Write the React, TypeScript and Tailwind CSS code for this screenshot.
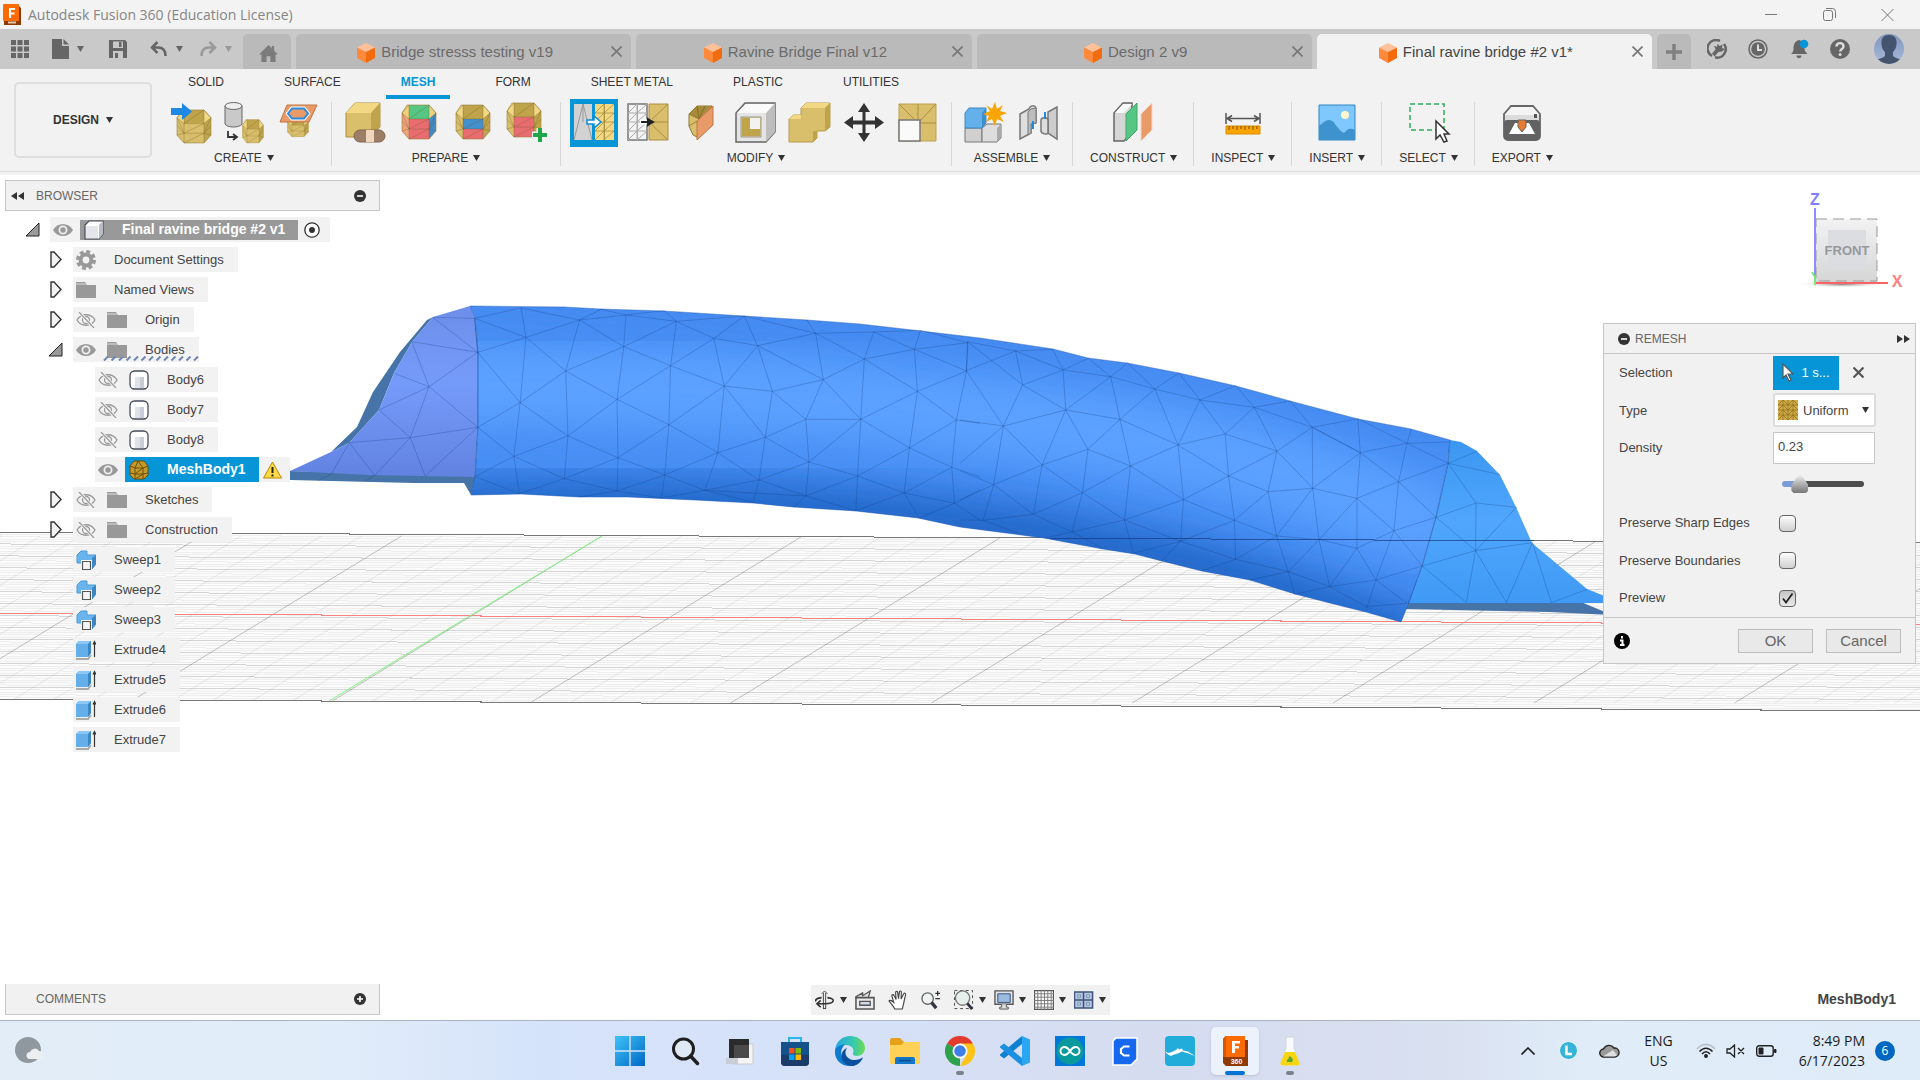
import type { ReactNode } from 'react'
import { useState } from 'react'

/* ---------- shared bits ---------- */

function Caret({ className = 'fill-[#333]' }: { className?: string }) {
  return (
    <svg className={`h-[6px] w-[7px] shrink-0 ${className}`} viewBox="0 0 7 6">
      <path d="M0 0h7L3.5 6z" />
    </svg>
  )
}

interface DrumProps {
  top?: string
  corner?: string
  upper?: string
  lower?: string
  left?: string
  right?: string
}

// Faceted mesh cylinder used by most of the mesh tools, drawn in a 36x36 box
function Drum({
  top = '#bfa44c',
  corner = '#f2d884',
  upper = '#d9be6b',
  lower = '#d9be6b',
  left = '#d9be6b',
  right = '#bfa44c',
}: DrumProps) {
  return (
    <g strokeLinejoin="round">
      <path d="M6 1h22l7 8v18l-7 8H8l-7-8V9z" fill={corner} />
      <path d="M1 9l7 6v20l-7-8z" fill={left} />
      <path d="M35 9l-7 6v20l7-8z" fill={right} />
      <path d="M8 1h20v14H8z" fill={top} />
      <path d="M8 15h20v10H8z" fill={upper} />
      <path d="M8 25h20v10H8z" fill={lower} />
      <path
        d="M8 1l-7 8 7 6h20l7-6-7-8M8 1v14L28 1v14M8 15v20M28 15v20M8 25L28 15M8 35l20-10M1 17l7 8h20l7-8M1 9l7 16M35 9l-7 16M1 27l7-2M35 27l-7-2"
        fill="none"
        stroke="#6b5a20"
        strokeOpacity="0.32"
      />
      <path d="M6 1h22l7 8v18l-7 8H8l-7-8V9z" fill="none" stroke="#96803a" strokeOpacity="0.6" />
    </g>
  )
}

function Cube() {
  return (
    <svg className="h-[20px] w-[18px] shrink-0" viewBox="0 0 18 20">
      <path d="M9 0l9 4.5L9 9 0 4.5z" fill="#ffc09a" />
      <path d="M0 4.5L9 9v11l-9-5z" fill="#ff8a3c" />
      <path d="M18 4.5L9 9v11l9-5z" fill="#f26c0d" />
    </svg>
  )
}

/* ---------- title and document tabs ---------- */

function TitleBar() {
  return (
    <header className="flex h-[29px] items-center bg-[#f3f3f3] pl-[3px]">
      <svg className="mr-[7px] h-[22px] w-[18px]" viewBox="0 0 18 22">
        <path d="M1 1h14l3 3v17H1z" fill="#8f3a00" />
        <rect width="16" height="17" rx="1" fill="#ff6b00" />
        <path d="M6 4h6v2H8v2.5h3.5v2H8V14H6z" fill="#fff" />
        <path d="M5 18.5h8" stroke="#e9c6ad" strokeWidth="2" />
      </svg>
      <span className="flex-1 font-['Open_Sans',sans-serif] text-[14px] text-[#858585]">
        Autodesk Fusion 360 (Education License)
      </span>
      <div className="flex items-center pr-[4px]">
        <button aria-label="Minimize" className="flex h-[29px] w-[58px] items-center justify-center">
          <svg className="h-[12px] w-[12px]" viewBox="0 0 12 12" stroke="#777"><path d="M0 5.5h12" /></svg>
        </button>
        <button aria-label="Restore" className="flex h-[29px] w-[58px] items-center justify-center">
          <svg className="h-[13px] w-[13px]" viewBox="0 0 13 13" fill="none" stroke="#777">
            <rect x="0.5" y="2.5" width="9" height="10" rx="2" />
            <path d="M3 .5h6.5a3 3 0 013 3V10" />
          </svg>
        </button>
        <button aria-label="Close" className="flex h-[29px] w-[58px] items-center justify-center">
          <svg className="h-[12px] w-[13px]" viewBox="0 0 13 12" stroke="#777"><path d="M.5 0l12 12M12.5 0l-12 12" /></svg>
        </button>
      </div>
    </header>
  )
}

const DOCS = [
  { name: 'Bridge stresss testing v19', active: false },
  { name: 'Ravine Bridge Final v12', active: false },
  { name: 'Design 2 v9', active: false },
  { name: 'Final ravine bridge #2 v1*', active: true },
]

function DocumentBar() {
  return (
    <div className="flex h-[40px] bg-[#c9c9c9]">
      <div className="flex w-[243px] shrink-0 items-center pl-[11px]">
        <button aria-label="Data panel">
          <svg className="h-[18px] w-[18px]" viewBox="0 0 18 18" fill="#666">
            <path d="M0 0h5v5H0zM6.5 0h5v5h-5zM13 0h5v5h-5zM0 6.5h5v5H0zM6.5 6.5h5v5h-5zM13 6.5h5v5h-5zM0 13h5v5H0zM6.5 13h5v5h-5zM13 13h5v5h-5z" />
          </svg>
        </button>
        <button aria-label="File" className="ml-[23px] flex items-center gap-[8px]">
          <svg className="h-[20px] w-[17px]" viewBox="0 0 17 20" fill="#666">
            <path d="M0 0h10v7h7v13H0z" />
            <path d="M11.5 0L17 5.5h-5.5z" />
          </svg>
          <Caret className="fill-[#666]" />
        </button>
        <button aria-label="Save" className="ml-[25px]">
          <svg className="h-[18px] w-[18px]" viewBox="0 0 18 18">
            <path d="M0 0h16l2 2v16H0z" fill="#666" />
            <path d="M4 1.5h10V8H4zM4 11h10v7H4z" fill="#c9c9c9" />
            <path d="M10 2h2.5v5H10zM6 13h3v5H6z" fill="#666" />
          </svg>
        </button>
        <button aria-label="Undo" className="ml-[23px] flex items-center gap-[9px]">
          <svg className="h-[16px] w-[17px]" viewBox="0 0 17 16" fill="none" stroke="#666" strokeWidth="2.5">
            <path d="M7.5 1L2 6.5 7.5 12M2 6.5h6c5 0 7.5 3 7.5 8.5" />
          </svg>
          <Caret className="fill-[#666]" />
        </button>
        <button aria-label="Redo" className="ml-[17px] flex items-center gap-[8px]">
          <svg className="h-[16px] w-[17px]" viewBox="0 0 17 16" fill="none" stroke="#999" strokeWidth="2.5">
            <path d="M9.5 1L15 6.5 9.5 12M15 6.5H9c-5 0-7.5 3-7.5 8.5" />
          </svg>
          <Caret className="fill-[#999]" />
        </button>
      </div>
      <nav className="flex min-w-0 flex-1 gap-[5px] pt-[5px]">
        <button aria-label="Home" className="flex w-[48px] shrink-0 items-center justify-center rounded-t-[5px] bg-[#bababa]">
          <svg className="mt-[4px] ml-[3px] h-[17px] w-[19px]" viewBox="0 0 20 18" fill="#7b7b7b">
            <path d="M10 0l3.5 3.5V1H16v5l4 4h-2.5v8H12v-6H8v6H2.5v-8H0z" />
          </svg>
        </button>
        {DOCS.map((doc) => (
          <div
            key={doc.name}
            className={`flex min-w-0 flex-1 items-center rounded-t-[5px] pl-[12px] text-[15px] ${
              doc.active ? 'bg-[#f2f2f2] text-[#444]' : 'bg-[#bababa] text-[#6a6a6a]'
            }`}
          >
            <button className="flex min-w-0 flex-1 items-center justify-center gap-[6px] pt-[2px] whitespace-nowrap">
              <Cube />
              {doc.name}
            </button>
            <button aria-label="Close tab" className="flex w-[29px] justify-center">
              <svg className="h-[11px] w-[11px]" viewBox="0 0 11 11" stroke="#777" strokeWidth="1.7">
                <path d="M.5.5l10 10M10.5.5l-10 10" />
              </svg>
            </button>
          </div>
        ))}
        <button aria-label="New tab" className="flex w-[34px] shrink-0 items-center justify-center rounded-t-[5px] bg-[#bababa]">
          <svg className="h-[16px] w-[16px]" viewBox="0 0 16 16" stroke="#808080" strokeWidth="3.5">
            <path d="M8 0v16M0 8h16" />
          </svg>
        </button>
      </nav>
      <div className="flex w-[229px] shrink-0 items-center gap-[21px] pl-[16px]">
        <button aria-label="Extensions">
          <svg className="h-[20px] w-[20px]" viewBox="0 0 20 20" fill="none">
            <path d="M5 17A8.5 8.5 0 0113 2M17 5a8.500 8.500 0 01-9 13.300" stroke="#666" strokeWidth="2.500" />
            <path d="M5 14.500l3.500-4L7 6.500 10 8l.5-3.500L12.500 7l3-1.500-.5 3.500 3 1-3 2.500-3.500.5-4 4.500z" fill="#666" />
          </svg>
        </button>
        <button aria-label="Job status">
          <svg className="h-[20px] w-[20px]" viewBox="0 0 20 20" fill="none">
            <circle cx="10" cy="10" r="9" stroke="#666" strokeWidth="1.5" />
            <circle cx="10" cy="10" r="6.8" fill="#666" />
            <path d="M10 5.5V11h4" stroke="#ddd" strokeWidth="2" />
          </svg>
        </button>
        <button aria-label="Notifications">
          <svg className="h-[20px] w-[20px]" viewBox="0 0 20 20">
            <path d="M10 1c4 1 5 4 5.500 9 0 2 1.500 3 3 5H2c2-2 2.500-3 2.500-5C4.500 5 6 2 10 1zM7.500 16.500h5c0 3.500-5 3.500-5 0z" fill="#666" />
            <circle cx="15" cy="5" r="4.3" fill="#0696d7" />
          </svg>
        </button>
        <button aria-label="Help">
          <svg className="h-[20px] w-[20px]" viewBox="0 0 20 20">
            <circle cx="10" cy="10" r="10" fill="#666" />
            <path d="M6.500 7.500c0-4.500 7-4.500 7 0 0 2.500-3.300 2.500-3.300 5" fill="none" stroke="#ddd" strokeWidth="2.4" />
            <circle cx="10.1" cy="15.6" r="1.5" fill="#ddd" />
          </svg>
        </button>
        <button aria-label="Account" className="ml-[3px]">
          <svg className="h-[30px] w-[30px]" viewBox="0 0 30 30">
            <defs>
              <linearGradient id="avatar" x1="0" y1="0" x2="0" y2="1">
                <stop offset="0" stopColor="#7f95bd" />
                <stop offset="1" stopColor="#a9bbdb" />
              </linearGradient>
              <clipPath id="avatarClip"><circle cx="15" cy="15" r="15" /></clipPath>
            </defs>
            <g clipPath="url(#avatarClip)">
              <rect width="30" height="30" fill="url(#avatar)" />
              <path d="M15 1c6 0 8 4 7.500 9-.3 4-1.500 6-3.500 8v4c2 2 6 2.500 8 4v5H3v-5c2-1.500 6-2 8-4v-4c-2-2-3.200-4-3.500-8C7 5 9 1 15 1z" fill="#44546f" />
            </g>
          </svg>
        </button>
      </div>
    </div>
  )
}

/* ---------- ribbon ---------- */

const RIBBON_TABS = ['SOLID', 'SURFACE', 'MESH', 'FORM', 'SHEET METAL', 'PLASTIC', 'UTILITIES']

interface Tool {
  name: string
  art: ReactNode
}

const CREATE: Tool[] = [
  {
    name: 'Insert mesh',
    art: (
      <>
        <g transform="translate(9 9) scale(1 0.97)"><Drum /></g>
        <path d="M4 8h11V3l10 8.500L15 20v-5H4z" fill="#1e88e5" />
      </>
    ),
  },
  {
    name: 'Tessellate',
    art: (
      <>
        <path d="M4 6v18c2 4 15 4 17 0V6" fill="#c9c9c9" stroke="#666" />
        <ellipse cx="12.5" cy="6" rx="8.5" ry="3.5" fill="#eee" stroke="#666" />
        <path d="M7 31v6h8M12 34l4 3-4 3" fill="none" stroke="#333" strokeWidth="1.8" />
        <g transform="translate(21 19) scale(0.61 0.68)"><Drum /></g>
      </>
    ),
  },
  {
    name: 'Section sketch',
    art: (
      <>
        <g transform="translate(12 17) scale(0.61 0.56)"><Drum /></g>
        <path d="M12 5h30l-8 17H5z" fill="#e89a68" stroke="#c17443" />
        <path d="M13 13.500l4-5h12l4 5-4 5H17z" fill="#f6e2d4" stroke="#fff" strokeWidth="4" />
        <path d="M13 13.500l4-5h12l4 5-4 5H17z" fill="#e89a68" stroke="#2b8be0" strokeWidth="2" />
      </>
    ),
  },
]

const PREPARE: Tool[] = [
  {
    name: 'Repair',
    art: (
      <>
        <path d="M4 13L13 3h25v24L29 37H4z" fill="#d9be6b" stroke="#a98f45" />
        <path d="M4 13L13 3h25L29 13z" fill="#f2d884" />
        <path d="M29 13L38 3v24L29 37z" fill="#bfa44c" />
        <rect x="12" y="30" width="31" height="12" rx="6" fill="#9c7f66" stroke="#7f6450" />
        <path d="M24 30h8v12h-8z" fill="#efd6bd" />
      </>
    ),
  },
  {
    name: 'Face groups',
    art: <g transform="translate(5 4)"><Drum top="#56c684" corner="#ecd27c" upper="#e96d70" lower="#e96d70" left="#f0a27d" right="#3f8ac9" /></g>,
  },
  {
    name: 'Combine face groups',
    art: <g transform="translate(5 4)"><Drum upper="#4390cf" lower="#e96d70" /></g>,
  },
  {
    name: 'Create face group',
    art: (
      <>
        <g transform="translate(2 2)"><Drum upper="#e96d70" lower="#e96d70" /></g>
        <path d="M28 35h15M36 28v14" stroke="#f2f2f2" strokeWidth="7" />
        <path d="M29 35h14M36 28v14" stroke="#1fa54a" strokeWidth="4" />
      </>
    ),
  },
]

const MODIFY: Tool[] = [
  {
    name: 'Remesh',
    art: (
      <>
        <path d="M3 4h18v36H3z" fill="#d2d2d2" />
        <path d="M3 40l9-36 9 36M12 4v18" fill="none" stroke="#999" />
        <path d="M24 4h19v36H24z" fill="#f5d982" />
        <path d="M24 13h19M24 22h19M24 31h19M33.500 4v36M24 13l9-9 0 9 10-9M24 22l9-9 0 9 10-9M24 31l9-9 0 9 10-9M24 40l9-9 0 9 10-9" fill="none" stroke="#9d843a" strokeOpacity="0.7" />
        <path d="M16 20h7v-4l7 6-7 6v-4h-7z" fill="#fff" stroke="#0a8fd6" strokeWidth="1.5" />
      </>
    ),
  },
  {
    name: 'Reduce',
    art: (
      <>
        <path d="M3 4h19v36H3z" fill="#f4f4f4" stroke="#777" strokeWidth="1.5" />
        <path d="M3 13h19M3 22h19M3 31h19M12.500 4v36M3 13l9-9 0 9 10-9M3 22l9-9 0 9 10-9M3 31l9-9 0 9 10-9M3 40l9-9 0 9 10-9" fill="none" stroke="#aaa" />
        <path d="M24 4h19v36H24z" fill="#d9be6b" stroke="#a98f45" />
        <path d="M43 4L24 22l19 18M24 22h19" fill="none" stroke="#a98f45" />
        <path d="M15 22h12" stroke="#fff" strokeWidth="5" />
        <path d="M16 22h9M23 19l5 3-5 3z" fill="#222" stroke="#222" strokeWidth="2" />
      </>
    ),
  },
  {
    name: 'Plane cut',
    art: (
      <>
        <path d="M10 14l8-8h15L20 20v18l-6-3-4-9z" fill="#d9be6b" stroke="#8f7934" />
        <path d="M10 14l8-8h14L20 19z" fill="#a58a38" />
        <path d="M18 6l2 13M10 14l10 5M10 26l10-6M26 6l-6 13" stroke="#6f5c22" strokeOpacity="0.6" />
        <path d="M18 21L34 6v19L18 40z" fill="#e89a68" stroke="#c17443" />
      </>
    ),
  },
  {
    name: 'Shell',
    art: (
      <>
        <path d="M3 13l9-10h30v29l-9 10H3z" fill="#e4e4e4" stroke="#666" strokeWidth="1.5" />
        <path d="M33 13l9-10v29l-9 10z" fill="#bdbdbd" />
        <path d="M4 13l9-9h28l-8 9z" fill="#fafafa" />
        <path d="M8 17h20v20H8z" fill="#e3ca7c" stroke="#999" />
        <path d="M9 18h8v11h10v7H9z" fill="#bfa44c" />
        <path d="M17 18h10v11H17z" fill="#f2f2f2" />
      </>
    ),
  },
  {
    name: 'Combine',
    art: (
      <>
        <path d="M2 19l4-4h8V8l5-5h24v24l-5 4h-8v7l-4 4H2z" fill="#d9be6b" stroke="#b79b4b" />
        <path d="M14 8l5-5h24l-5 5zM2 19l4-4h8v4z" fill="#f2d884" />
        <path d="M38 8l5-5v24l-5 4zM26 31h4v7l-4 4z" fill="#bfa44c" />
      </>
    ),
  },
  {
    name: 'Move',
    art: <path d="M23 3l6 9h-4.500v8.500H34V16l9 6.500-9 6.500v-4.500h-9.500V33H29l-6 9-6-9h4.500v-8.500H12V29l-9-6.500L12 16v4.500h9.500V12H17z" fill="#333" />,
  },
  {
    name: 'Scale',
    art: (
      <>
        <path d="M4 4h37v37H4z" fill="#d9be6b" stroke="#bca250" />
        <path d="M23 4v37M4 4l19 19M41 4L23 23h18" fill="none" stroke="#a98f45" />
        <path d="M4 20h21v21H4z" fill="#fafafa" stroke="#777" strokeWidth="1.5" />
      </>
    ),
  },
]

const ASSEMBLE: Tool[] = [
  {
    name: 'New component',
    art: (
      <>
        <path d="M3 28h17v14H3z" fill="#d0d0d0" stroke="#777" />
        <path d="M20 28l5-4h14v14l-4 4H20z" fill="#ddd" stroke="#777" />
        <path d="M35 28l4-4v14l-4 4z" fill="#aaa" />
        <path d="M3 13l4-5h17v15l-4 5H3z" fill="#64b0ea" stroke="#3a87c2" />
        <path d="M20 13l4-5v15l-4 5z" fill="#3f8fce" />
        <path d="M33 2l2 7 6-4-3 6 7 2-7 3 4 6-7-3-2 7-3-7-6 3 3-6-6-2 7-3-4-6 6 4z" fill="#f9a400" />
      </>
    ),
  },
  {
    name: 'Joint',
    art: (
      <>
        <path d="M4 14l9-5c1-4 6-4 7-1v15l-5 1v9L4 39z" fill="#dedede" stroke="#777" strokeWidth="1.5" />
        <path d="M12 12l3-3 5-1v15l-5 1v9l-3 2z" fill="#bdbdbd" stroke="#777" />
        <path d="M32 12l9-5v32l-9-6z" fill="#cdcdcd" stroke="#777" strokeWidth="1.5" />
        <path d="M25 20c0-3 7-3 7 0v13c0 2-7 1-7-2z" fill="#ddd" stroke="#777" strokeWidth="1.5" />
        <path d="M17 21v8M29 12v7" stroke="#1e88e5" strokeWidth="2" />
      </>
    ),
  },
]

const CONSTRUCT: Tool[] = [
  {
    name: 'Offset plane',
    art: (
      <>
        <path d="M3 13L12 3h9v29l-8 9H3z" fill="#d6d6d6" stroke="#666" strokeWidth="1.5" />
        <path d="M4 13l8-9h9l-8 9z" fill="#fafafa" />
        <path d="M15 14L26 3v27L15 41z" fill="#56c684" stroke="#3ca768" />
        <path d="M30 14L41 3v27L30 41z" fill="#e89a68" stroke="#f6d5c0" />
      </>
    ),
  },
]

const INSPECT: Tool[] = [
  {
    name: 'Measure',
    art: (
      <>
        <path d="M6 13v11M40 13v11M7 18.500h32M12 15.500l-5 3 5 3M34 15.500l5 3-5 3" fill="none" stroke="#555" strokeWidth="1.5" />
        <path d="M6 26h34v8H6z" fill="#f9a400" stroke="#d98c00" />
        <path d="M9 26v4M13 26v3M17 26v4M21 26v3M25 26v4M29 26v3M33 26v4M37 26v3" stroke="#7a4d00" />
      </>
    ),
  },
]

const INSERT: Tool[] = [
  {
    name: 'Insert image',
    art: (
      <>
        <path d="M5 5h36v35H5z" fill="#7fc8ff" stroke="#2f86c4" />
        <path d="M5 26c5-4 7-6 10-6 6 0 8 10 15 13 3-3 5-6 11-3v10H5z" fill="#3e93cf" />
        <circle cx="31" cy="15" r="4" fill="#fff8cf" />
      </>
    ),
  },
]

const SELECT: Tool[] = [
  {
    name: 'Select',
    art: (
      <>
        <path d="M5 4h34v26H5z" fill="none" stroke="#2fae5b" strokeWidth="1.5" strokeDasharray="5 3" />
        <path d="M31 21v18l4-4 4 7 3-1-3-7h5z" fill="#fff" stroke="#333" strokeWidth="1.5" />
      </>
    ),
  },
]

const EXPORT: Tool[] = [
  {
    name: 'Make',
    art: (
      <>
        <path d="M5 14l7-8h22l7 8v22a4 4 0 01-4 4H9a4 4 0 01-4-4z" fill="#f4f4f4" stroke="#666" strokeWidth="1.8" />
        <path d="M6 15h34v5H6z" fill="#dcdcdc" />
        <path d="M8 20h30a3 3 0 013 3v13a4 4 0 01-4 4H9a4 4 0 01-4-4V23a3 3 0 013-3z" fill="#626262" />
        <path d="M35 14h3v4h-3z" fill="#555" />
        <path d="M10 34l6-11h14l6 11z" fill="#fff" />
        <path d="M19 20h8v7l-4 5-4-5z" fill="#e67a30" stroke="#626262" />
      </>
    ),
  },
]

const GROUPS = [
  { label: 'CREATE', tools: CREATE },
  { label: 'PREPARE', tools: PREPARE },
  { label: 'MODIFY', tools: MODIFY },
  { label: 'ASSEMBLE', tools: ASSEMBLE },
  { label: 'CONSTRUCT', tools: CONSTRUCT },
  { label: 'INSPECT', tools: INSPECT },
  { label: 'INSERT', tools: INSERT },
  { label: 'SELECT', tools: SELECT },
  { label: 'EXPORT', tools: EXPORT },
]

function Ribbon() {
  const [tab, setTab] = useState('MESH')

  return (
    <div className="flex h-[103px] border-b border-[#dcdcdc] bg-[#f2f2f2] text-[12px] text-[#333]">
      <button className="mt-[13px] ml-[14px] flex h-[76px] w-[138px] shrink-0 items-center justify-center gap-[7px] rounded-[5px] border-2 border-[#dedede] font-bold">
        DESIGN
        <Caret />
      </button>
      <div className="ml-[5px] flex flex-col">
        <nav className="flex h-[30px] gap-[30px] pl-[16px]">
          {RIBBON_TABS.map((name) => (
            <button
              key={name}
              onClick={() => setTab(name)}
              className={`h-[30px] border-b-4 px-[15px] ${
                tab === name ? 'border-[#0696d7] font-bold text-[#0696d7]' : 'border-transparent'
              }`}
            >
              {name}
            </button>
          ))}
        </nav>
        <div className="flex">
          {GROUPS.map((group) => (
            <div
              key={group.label}
              className={`relative flex flex-col items-center ${group.tools.length > 1 ? 'pr-[10px] pl-[9px]' : 'px-[17px]'}`}
            >
              <div className="flex gap-[6px]">
                {group.tools.map((tool) => (
                  <button
                    key={tool.name}
                    aria-label={tool.name}
                    className={`h-[48px] w-[48px] p-px ${tool.name === 'Remesh' ? 'bg-[#0696d7]' : ''}`}
                  >
                    <svg className="h-full w-full" viewBox="0 0 46 46">{tool.art}</svg>
                  </button>
                ))}
              </div>
              <button className="flex h-[22px] items-center gap-[5px]">
                {group.label}
                <Caret />
              </button>
              {group.label !== 'EXPORT' && <span className="absolute top-[3px] right-0 h-[64px] w-px bg-[#d8d8d8]" />}
            </div>
          ))}
        </div>
      </div>
    </div>
  )
}

/* ---------- model viewport ---------- */

const TUBE =
  'M470 306L564 307 601 309 664 311 744 316 807 320 860 324 921 331 980 338 1053 349 1088 358 1127 363 1179 373 1236 386 1290 401 1358 419 1411 429 1450 440 1448 463 1436 517 1422 566 1408 605 1401 622 1366 612 1330 603 1295 594 1250 580 1202 571 1162 561 1135 554 1103 549 1044 538 960 527 918 518 856 511 793 507 753 503 695 500 628 497 579 497 521 494 471 495 475 477 478 427 478 352 475 318z'

// Edge chains of the left half, in the units of its own scaled group
const EDGES_LEFT = [
  '540,54 551,142 538,338 524,499 536,611',
  '671,90 640,243 645,438 637,566',
  '775,75 770,170 755,328 757,503 755,603',
  '888,94 875,227 871,404 862,555 854,624',
  '1040,78 972,145 995,288 981,488 952,601',
  '1040,78 1070,167 1103,304 1087,442 1073,570 1060,637',
  '1200,130 1217,269 1178,388 1185,516 1178,618 1150,652',
  '1330,126 1309,207 1301,388 1294,558 1290,662',
  '1435,121 1421,178 1428,304 1410,474 1398,609 1432,684',
  '1541,158 1538,243 1515,390 1505,532 1511,640',
  '436,85 540,54 671,90 720,58 775,75 860,62 888,94 1040,78 1200,130 1180,90',
  '671,90 775,75 888,94',
  '436,85 551,142 640,243 755,328 871,404 981,488 1073,570 1178,618',
  '443,187 538,338 645,438 757,503 862,555 952,601 1060,637',
  '443,412 524,499 637,566 755,603 854,624',
  '536,611 637,566 757,503 871,404 995,288 1070,167 1200,130 1330,126',
  '437,560 536,611',
  '443,187 551,142 671,90 770,170 875,227 995,288 1103,304 1217,269 1309,207 1421,178 1541,158',
  '443,412 538,338 640,243 770,170 888,94 972,145',
  '1070,167 1217,269 1301,388',
  '437,560 524,499 645,438 755,328 875,227 972,145 1070,167',
  '670,621 755,603 862,555 981,488 1087,442 1178,388 1301,388 1410,474 1505,532 1568,560',
  '854,624 952,601 1073,570 1185,516 1301,388 1428,304 1538,243',
  '1200,130 1309,207 1428,304 1515,390 1568,400',
  '995,288 1087,442 1185,516 1294,558 1398,609 1511,640 1568,690',
  '1103,304 1178,388',
  '952,601 1178,618 1294,558 1410,474 1515,390',
  '1290,662 1398,609 1505,532',
  '1432,684 1511,640 1568,600',
  '1178,618 1290,662',
  '1330,126 1421,178 1538,243',
  '1330,126 1435,121 1541,158',
  '342,82 436,85 443,187 295,155 334,290 292,443 325,558 443,412',
  '342,82 443,187 334,290 256,250',
  '222,360 334,290 443,412 292,443 155,458 115,552',
  '222,360 292,443 212,556 155,458',
  '436,85 443,187 443,412 437,560',
  '115,552 85,572',
  '212,556 190,575',
]

const EDGES_RIGHT = [
  '18,65 15,152 103,318 80,494 55,601',
  '18,65 149,195 251,270 195,435 174,583',
  '132,93 149,195 103,318',
  '220,88 245,150 251,270 304,388 291,518 266,636',
  '305,115 358,170 380,298 405,438 391,600 412,700',
  '398,129 463,207 518,375 531,539 524,664',
  '520,159 570,240 518,375',
  '520,159 463,207 380,298 304,388 195,435 80,494 0,540',
  '570,240 630,342 638,468 652,601 655,718',
  '655,197 699,262 630,342 518,375',
  '655,197 570,240',
  '785,243 837,322 838,505 853,659 878,800',
  '785,243 699,262 753,393 732,515 752,648 780,755 795,823',
  '945,296 951,398 943,535 943,685 878,800',
  '1072,327 1062,370 1042,485 1031,632 988,780 965,870',
  '18,65 132,93 220,88',
  '15,152 132,93 245,150 358,170 463,207 570,240 699,262 837,322 951,398 1042,485 1131,592',
  '149,195 245,150 305,115',
  '0,430 103,318 251,270 358,170 398,129',
  '0,300 103,318 195,435 291,518 391,600 524,664 655,718 780,755 878,800 965,860 1062,850',
  '251,270 380,298 518,375 638,468 732,515 838,505 943,535 1031,632 1098,738',
  '304,388 405,438 531,539 652,601 752,648 853,659 943,685 988,780 1062,850',
  '0,452 80,494 174,583 266,636 340,686',
  '0,600 55,601 174,583 291,518 405,438 518,375',
  '630,342 753,393 838,505',
  '837,322 951,398 1062,370 1163,366',
  '200,655 266,636 391,600 531,539 638,468 753,393 837,322 945,296 1062,370 1160,430',
  '480,722 524,664 652,601 732,515',
  '412,700 524,664',
  '575,752 655,718 752,648 838,505 951,398',
  '690,780 780,755 853,659 943,535 1042,485 1160,430',
  '795,823 878,800 988,780 1098,738',
  '943,685 1031,632 1131,592',
  '55,601 140,640',
  '1163,362 1160,430 1131,592 1098,738 1065,850',
  '1228,394 1160,430 1283,464',
  '1160,430 1226,549',
  '1322,562 1226,549 1131,592 1225,692 1322,562',
  '1226,549 1225,692 1203,848 1098,738 1225,692 1360,668',
  '1225,692 1298,848 1360,668 1405,848 1490,808',
]

const MAJOR = Array.from({ length: 19 }, (_, i) => i - 6)
const MINOR = Array.from({ length: 95 }, (_, i) => i - 30)
const ROWS = Array.from({ length: 71 }, (_, i) => i)

function GridLines() {
  return (
    <g fill="none">
      <g stroke="#000" strokeOpacity="0.07">
        {MINOR.map((i) => (
          <path key={i} d={`M${602 + i * 40.1} 536L${329 + i * 40.16} 703`} />
        ))}
      </g>
      <g stroke="#000" strokeOpacity="0.17">
        {MAJOR.map((i) => (
          <path key={i} d={`M${602 + i * 200.5} 536L${329 + i * 200.8} 703`} />
        ))}
      </g>
      <g shapeRendering="crispEdges" stroke="#000">
        {ROWS.map((i) => (
          <path key={i} strokeOpacity={i % 5 ? 0.05 : 0.15} d={`M0 ${532 + i * 2.39}L1920 ${543 + i * 2.41}`} />
        ))}
      </g>
    </g>
  )
}

function Viewport() {
  return (
    <svg className="absolute inset-0 h-full w-full" viewBox="0 175 1920 845" preserveAspectRatio="xMidYMid slice">
      <defs>
        <clipPath id="floor"><path d="M0 532L1920 543V711L0 699z" /></clipPath>
        <clipPath id="tube"><path d={TUBE} /></clipPath>
        <filter id="soft" x="-10%" y="-30%" width="120%" height="160%"><feGaussianBlur stdDeviation="18" /></filter>
        <linearGradient id="endLeft" x1="0" y1="0" x2="0" y2="1">
          <stop offset="0" stopColor="#6d8eea" />
          <stop offset="0.45" stopColor="#759bfa" />
          <stop offset="1" stopColor="#6282e0" />
        </linearGradient>
        <linearGradient id="endRight" x1="0" y1="0" x2="0" y2="1">
          <stop offset="0" stopColor="#3b97f2" />
          <stop offset="0.5" stopColor="#50a6fc" />
          <stop offset="1" stopColor="#3f9af5" />
        </linearGradient>
      </defs>
      <rect y="175" width="1920" height="846" fill="#fff" />

      {/* ground plane */}
      <g clipPath="url(#floor)">
        <rect y="530" width="1920" height="185" fill="#fbfbfb" />
        <GridLines />
      </g>
      <g shapeRendering="crispEdges" fill="none">
        <path d="M0 532L1920 543" stroke="#777" />
        <path d="M0 699L1920 711" stroke="#777" />
        <path d="M0 613L1920 625" stroke="#ff8080" />
      </g>
      <path d="M602 536L329 701" stroke="#7df57d" />

      {/* side walls and flanges */}
      <path d="M433 317L427 320 400 352 373 392 357 427 331 452 349 443 379 410 394 373 412 342z" fill="#4674a8" />
      <path d="M290 471L290 480 414 483 464 483 471 495 476 476z" fill="#4674a8" />
      <path d="M1406 602L1581 602 1612 615 1549 612 1404 609z" fill="#4674a8" />

      <path d="M470 306L475 318 478 352 478 427 475 477 369 475 290 471 331 452 349 443 379 410 394 373 412 342 433 317z" fill="url(#endLeft)" />
      <path d="M1450 440L1461 442 1477 451 1500 475 1516 507 1532 543 1587 589 1612 599V603H1408L1422 566 1436 517 1448 463z" fill="url(#endRight)" />

      <g clipPath="url(#tube)">
        <path d={TUBE} fill="#478ef4" />
        <path d="M440 385C700 385 900 400 1100 432S1350 500 1450 530" fill="none" stroke="#5ca1ff" strokeWidth="80" filter="url(#soft)" />
        <path d="M440 510C700 505 900 510 1100 550S1300 610 1420 640" fill="none" stroke="#2468c9" strokeWidth="60" filter="url(#soft)" />
        <path d="M440 300C700 300 900 320 1100 350S1350 410 1460 430" fill="none" stroke="#3f84ea" strokeWidth="16" filter="url(#soft)" />
      </g>
      <path d={TUBE} fill="none" stroke="#1f5cb5" strokeOpacity="0.5" />

      <g fill="none" stroke="#123a80" strokeOpacity="0.27">
        <g transform="translate(280 290) scale(0.4464 0.3333)">
          {EDGES_LEFT.map((pts) => (
            <polyline key={pts} points={pts} vectorEffect="non-scaling-stroke" />
          ))}
        </g>
        <g transform="translate(960 320) scale(0.4209 0.3333)">
          {EDGES_RIGHT.map((pts) => (
            <polyline key={pts} points={pts} vectorEffect="non-scaling-stroke" />
          ))}
        </g>
        <path d="M1050 538L1534 541" strokeOpacity="0.7" shapeRendering="crispEdges" />
      </g>
    </svg>
  )
}

function ViewCube() {
  return (
    <svg className="absolute top-[10px] right-[10px] h-[110px] w-[120px]" viewBox="1790 185 120 110" fontFamily="Liberation Sans, Arial, sans-serif" fontWeight="bold">
      <defs>
        <linearGradient id="cubeFace" x1="0" y1="0" x2="0" y2="1">
          <stop offset="0" stopColor="#f2f2f2" />
          <stop offset="1" stopColor="#d6d6d6" />
        </linearGradient>
        <radialGradient id="cubeShadow">
          <stop offset="0" stopColor="#777" />
          <stop offset="1" stopColor="#fff" stopOpacity="0" />
        </radialGradient>
      </defs>
      <ellipse cx="1842" cy="284" rx="46" ry="4" fill="url(#cubeShadow)" />
      <rect x="1815" y="219" width="62" height="63" fill="url(#cubeFace)" />
      <rect x="1828" y="230" width="38" height="39" fill="#dcdde1" />
      <rect x="1816" y="219" width="61" height="62" fill="none" stroke="#999" strokeDasharray="11 6" />
      <path d="M1815 208v74" stroke="#8c8cff" strokeWidth="2" />
      <path d="M1815 283h73" stroke="#ff6464" strokeWidth="2" />
      <path d="M1812 272l3 5v8" fill="none" stroke="#7be87b" strokeWidth="2" />
      <text x="1815" y="205" textAnchor="middle" fontSize="16" fill="#8080ff">Z</text>
      <text x="1897" y="287" textAnchor="middle" fontSize="16" fill="#ff8080">X</text>
      <text x="1847" y="255" textAnchor="middle" fontSize="13" fill="#96989c">FRONT</text>
    </svg>
  )
}

/* ---------- browser tree ---------- */

type Kind = 'gear' | 'folder' | 'body' | 'mesh' | 'sweep' | 'extrude' | 'root'

interface Node {
  name: string
  kind: Kind
  depth: 0 | 1 | 2
  arrow?: 'open' | 'closed'
  eye?: 'on' | 'off'
}

const TREE: Node[] = [
  { name: 'Final ravine bridge #2 v1', kind: 'root', depth: 0, arrow: 'open', eye: 'on' },
  { name: 'Document Settings', kind: 'gear', depth: 1, arrow: 'closed' },
  { name: 'Named Views', kind: 'folder', depth: 1, arrow: 'closed' },
  { name: 'Origin', kind: 'folder', depth: 1, arrow: 'closed', eye: 'off' },
  { name: 'Bodies', kind: 'folder', depth: 1, arrow: 'open', eye: 'on' },
  { name: 'Body6', kind: 'body', depth: 2, eye: 'off' },
  { name: 'Body7', kind: 'body', depth: 2, eye: 'off' },
  { name: 'Body8', kind: 'body', depth: 2, eye: 'off' },
  { name: 'MeshBody1', kind: 'mesh', depth: 2, eye: 'on' },
  { name: 'Sketches', kind: 'folder', depth: 1, arrow: 'closed', eye: 'off' },
  { name: 'Construction', kind: 'folder', depth: 1, arrow: 'closed', eye: 'off' },
  { name: 'Sweep1', kind: 'sweep', depth: 1 },
  { name: 'Sweep2', kind: 'sweep', depth: 1 },
  { name: 'Sweep3', kind: 'sweep', depth: 1 },
  { name: 'Extrude4', kind: 'extrude', depth: 1 },
  { name: 'Extrude5', kind: 'extrude', depth: 1 },
  { name: 'Extrude6', kind: 'extrude', depth: 1 },
  { name: 'Extrude7', kind: 'extrude', depth: 1 },
]

const NODE_ART: Record<Kind, ReactNode> = {
  root: (
    <>
      <path d="M1 5l4-4h14v13l-4 5H1z" fill="#fff" stroke="#444b58" strokeWidth="1.2" />
      <path d="M2 6h12v12H2z" fill="#e4e6ec" />
      <path d="M15 5l4-4v13l-4 5z" fill="#b9bcc6" />
    </>
  ),
  gear: (
    <>
      <circle cx="10" cy="10" r="8.2" fill="none" stroke="#999" strokeWidth="3.6" strokeDasharray="3.8 2.64" />
      <circle cx="10" cy="10" r="5.4" fill="none" stroke="#999" strokeWidth="4" />
    </>
  ),
  folder: (
    <>
      <path d="M0 2h9L11 5h9v13H0z" fill="#999" />
      <path d="M0 4h11" stroke="#ddd" />
    </>
  ),
  body: (
    <>
      <rect x="1" y="1" width="18" height="18" rx="4.5" fill="#fff" stroke="#454c5a" strokeWidth="1.3" />
      <path d="M6 7h5v11H6z" fill="#dfe2e8" />
      <path d="M11 7h4v11h-4z" fill="#c9cdd6" />
    </>
  ),
  mesh: (
    <>
      <path d="M5 1h10l4 5v9l-4 4H5l-4-4V6z" fill="#c69a28" stroke="#6b4f0c" />
      <path d="M1 6l5 2h8l5-2M6 8v11M14 8v11M1 13l5 1h8l5-1M6 14l8-6M6 19l8-5M6 8l3-7 5 7" fill="none" stroke="#6b4f0c" />
    </>
  ),
  sweep: (
    <>
      <path d="M1 5l4-4h6v4h9v9l-4 5H6V13H1z" fill="#6ab4ee" stroke="#4d9bd8" />
      <path d="M16 8l4-3v9l-4 5z" fill="#3c86c4" />
      <path d="M6.500 11.500h8v8h-8z" fill="#fff" stroke="#fff" strokeWidth="3" />
      <path d="M6.500 11.500h8v8h-8z" fill="#f4f4f4" stroke="#555" strokeWidth="1.2" />
    </>
  ),
  extrude: (
    <>
      <path d="M0 19h12l3-4" fill="none" stroke="#aaa" strokeWidth="2" />
      <path d="M0 4l3-3h12v12l-3 4H0z" fill="#64aee9" />
      <path d="M0 4l3-3h12l-3 3z" fill="#8cc8f6" />
      <path d="M12 4l3-3v12l-3 4z" fill="#3c86c4" />
      <path d="M18.500 17V2M17 4.500l1.500-3 1.500 3" fill="none" stroke="#333" strokeWidth="1.2" />
    </>
  ),
}

function Eye({ on }: { on: boolean }) {
  return (
    <button aria-label="Visibility" className="shrink-0">
      <svg className="h-[16px] w-[20px]" viewBox="0 0 20 16" fill="none" stroke="#999">
        {on ? (
          <>
            <path d="M0 8c4.500-8 15.500-8 20 0-4.500 8-15.500 8-20 0z" fill="#999" stroke="none" />
            <circle cx="10" cy="8" r="3.6" fill="#999" stroke="#eee" strokeWidth="1.8" />
          </>
        ) : (
          <>
            <path d="M1 8c4-7 14-7 18 0-4 7-14 7-18 0z" strokeWidth="1.3" />
            <circle cx="10" cy="8" r="3.5" strokeWidth="1.3" />
            <path d="M3 0l15 16" stroke="#f2f2f2" strokeWidth="3" />
            <path d="M3 0l15 16" strokeWidth="1.2" />
          </>
        )}
      </svg>
    </button>
  )
}

const INDENT = ['w-[50px]', 'w-[73px]', 'w-[95px]']

function TreeRow({ node }: { node: Node }) {
  const marked = node.kind === 'root' ? 'bg-[#999]' : node.kind === 'mesh' ? 'bg-[#0696d7]' : ''

  return (
    <li className="flex h-[25px]">
      <div className={`flex shrink-0 items-center justify-end ${INDENT[node.depth]} ${node.arrow === 'closed' ? 'pr-[11px]' : 'pr-[10px]'}`}>
        {node.arrow && (
          <button aria-label="Toggle">
            {node.arrow === 'open' ? (
              <svg className="h-[15px] w-[15px]" viewBox="0 0 15 15">
                <path d="M14 1v13H1z" fill="#999" stroke="#222" />
              </svg>
            ) : (
              <svg className="h-[17px] w-[12px]" viewBox="0 0 12 17">
                <path d="M1 1h3l7 7.500L4 16H1z" fill="#f2f2f2" stroke="#333" strokeWidth="1.4" />
              </svg>
            )}
          </button>
        )}
      </div>
      <div className="relative flex items-center bg-[#f2f2f2] pl-[3px]">
        {node.eye && <span className="mr-[7px] flex"><Eye on={node.eye === 'on'} /></span>}
        <button
          className={`flex items-center gap-[18px] ${node.eye ? 'pl-[4px]' : ''} ${
            marked ? `${marked} pr-[13px] text-[14px] font-bold text-white` : 'pr-[14px]'
          } ${node.kind === 'mesh' ? 'h-[25px]' : 'h-[20px]'}`}
        >
          <svg className="h-[20px] w-[20px] shrink-0" viewBox="0 0 20 20">{NODE_ART[node.kind]}</svg>
          {node.name}
        </button>
        {node.kind === 'root' && (
          <svg className="mx-[6px] mr-[10px] h-[16px] w-[16px]" viewBox="0 0 16 16">
            <circle cx="8" cy="8" r="7.2" fill="#fff" stroke="#333" strokeWidth="1.3" />
            <circle cx="8" cy="8" r="3" fill="#333" />
          </svg>
        )}
        {node.kind === 'mesh' && (
          <svg className="mx-[4px] mr-[8px] h-[18px] w-[19px]" viewBox="0 0 19 18">
            <path d="M9.500 1L18.500 17H.5z" fill="#ffd94a" stroke="#b98a00" strokeLinejoin="round" />
            <path d="M9.500 6v6M9.500 13.500v2" stroke="#222" strokeWidth="2" />
          </svg>
        )}
        {node.name === 'Bodies' && (
          <svg className="absolute bottom-[1px] left-[30px] h-[5px] w-[97px]" viewBox="0 0 97 5" stroke="#6f86b0" strokeWidth="2">
            {Array.from({ length: 13 }, (_, i) => (
              <path key={i} d={`M${i * 7.5 + 1} 4.500l4-4`} />
            ))}
          </svg>
        )}
      </div>
    </li>
  )
}

function RoundSign({ plus = false }: { plus?: boolean }) {
  return (
    <svg className="h-[12px] w-[12px] shrink-0" viewBox="0 0 12 12">
      <circle cx="6" cy="6" r="6" fill="#333" />
      <path d={plus ? 'M3 6h6M6 3v6' : 'M3 6h6'} stroke="#fff" strokeWidth="1.6" />
    </svg>
  )
}

function Browser() {
  return (
    <aside className="relative w-[380px] pt-[5px]">
      <div className="ml-[5px] flex h-[31px] items-center border border-[#c6c6c6] bg-[#f1f1f1] pr-[13px] pl-[5px] text-[12px] text-[#666]">
        <button aria-label="Collapse panel">
          <svg className="h-[8px] w-[13px]" viewBox="0 0 13 8" fill="#333"><path d="M6 0v8L0 4zM13 0v8L7 4z" /></svg>
        </button>
        <h2 className="ml-[12px] flex-1">BROWSER</h2>
        <RoundSign />
      </div>
      <ul className="mt-[6px] flex flex-col gap-[5px] text-[13px] text-[#444]">
        {TREE.map((node) => (
          <TreeRow key={node.name} node={node} />
        ))}
      </ul>
    </aside>
  )
}

/* ---------- remesh dialog ---------- */

function CheckRow({ id, label, checked = false }: { id: string; label: string; checked?: boolean }) {
  return (
    <div className="flex items-center">
      <label htmlFor={id} className="w-[160px]">{label}</label>
      <div className="relative flex">
        <input
          id={id}
          type="checkbox"
          defaultChecked={checked}
          className="peer h-[17px] w-[17px] appearance-none rounded-[4px] border border-[#666] bg-linear-to-b from-[#fdfdfd] to-[#cfcfcf] checked:from-[#c4c4c4] checked:to-[#ececec]"
        />
        <svg className="pointer-events-none absolute inset-0 hidden h-[17px] w-[17px] peer-checked:block" viewBox="0 0 17 17" fill="none" stroke="#222" strokeWidth="1.8">
          <path d="M4 8.500l3 4 6.500-9" />
        </svg>
      </div>
    </div>
  )
}

function RemeshPanel() {
  const [density, setDensity] = useState(0.23)

  return (
    <section className="absolute top-[148px] right-[4px] w-[313px] border border-[#c6c6c6] bg-[#f1f1f1] text-[13px] text-[#444]">
      <header className="flex h-[30px] items-center border-b border-[#c6c6c6] pr-[5px] pl-[14px] text-[12px] text-[#666]">
        <RoundSign />
        <h2 className="ml-[5px] flex-1">REMESH</h2>
        <svg className="h-[8px] w-[13px]" viewBox="0 0 13 8" fill="#333"><path d="M0 0v8l6-4zM7 0v8l6-4z" /></svg>
      </header>
      <div className="grid h-[264px] grid-rows-7 border-b border-[#c6c6c6] pl-[15px]">
        <div className="flex items-center">
          <span className="w-[154px]">Selection</span>
          <button className="flex h-[34px] w-[66px] items-center justify-center gap-[7px] bg-[#0696d7] text-white">
            <svg className="h-[19px] w-[12px]" viewBox="0 0 12 19">
              <path d="M1 1v14l3-3 3 6 2-1-3-6h5z" fill="#fff" stroke="#555" strokeWidth="1.2" />
            </svg>
            1 s...
          </button>
          <button aria-label="Clear selection" className="ml-[14px]">
            <svg className="h-[11px] w-[11px]" viewBox="0 0 11 11" stroke="#555" strokeWidth="2.2"><path d="M.5.5l10 10M10.500.5l-10 10" /></svg>
          </button>
        </div>
        <div className="flex items-center">
          <label htmlFor="type" className="w-[154px]">Type</label>
          <div className="relative flex items-center">
            <select id="type" className="h-[34px] w-[103px] appearance-none rounded-[3px] border-2 border-[#dcdcdc] bg-white pl-[28px]">
              <option>Uniform</option>
              <option>Adaptive</option>
            </select>
            <svg className="pointer-events-none absolute left-[5px] h-[20px] w-[20px]" viewBox="0 0 20 20">
              <path d="M0 0h20v20H0z" fill="#d0ac48" />
              <path d="M0 5h20M0 10h20M0 15h20M5 0v20M10 0v20M15 0v20M0 5l5-5 5 5 5-5 5 5M0 10l5-5 5 5 5-5 5 5M0 15l5-5 5 5 5-5 5 5M0 20l5-5 5 5 5-5 5 5" fill="none" stroke="#937220" strokeWidth="0.8" />
            </svg>
            <span className="pointer-events-none absolute right-[7px] flex"><Caret /></span>
          </div>
        </div>
        <div className="flex items-center">
          <label htmlFor="density" className="w-[154px]">Density</label>
          <input
            id="density"
            value={density}
            onChange={(e) => setDensity(Number(e.target.value) || 0)}
            className="h-[32px] w-[102px] border border-[#c6c6c6] bg-white pb-[3px] pl-[4px]"
          />
        </div>
        <div className="flex items-center pb-[3px] pl-[163px]">
          <input
            aria-label="Density"
            type="range"
            min="0.1"
            max="1"
            step="0.01"
            value={density}
            onChange={(e) => setDensity(Number(e.target.value))}
            className="h-[6px] w-[82px] appearance-none rounded-full bg-[linear-gradient(to_right,#7b9cd8_20%,#4d4d4d_20%)] [&::-webkit-slider-thumb]:h-[18px] [&::-webkit-slider-thumb]:w-[17px] [&::-webkit-slider-thumb]:appearance-none [&::-webkit-slider-thumb]:rounded-[3px] [&::-webkit-slider-thumb]:bg-linear-to-b [&::-webkit-slider-thumb]:from-[#eee] [&::-webkit-slider-thumb]:to-[#777] [&::-webkit-slider-thumb]:[clip-path:polygon(50%_0,65%_8%,100%_55%,100%_88%,88%_100%,12%_100%,0_88%,0_55%,35%_8%)]"
          />
        </div>
        <CheckRow id="sharp" label="Preserve Sharp Edges" />
        <CheckRow id="boundaries" label="Preserve Boundaries" />
        <CheckRow id="preview" label="Preview" checked />
      </div>
      <footer className="flex h-[45px] items-center pr-[14px] pl-[10px] text-[15px] text-[#666]">
        <button aria-label="Info" className="mr-auto">
          <svg className="h-[16px] w-[16px]" viewBox="0 0 16 16">
            <circle cx="8" cy="8" r="8" fill="#000" />
            <path d="M8 3v2.500M6 7.500h2.500V12M6 12h4.500" fill="none" stroke="#fff" strokeWidth="2" />
          </svg>
        </button>
        <button className="mr-[13px] h-[24px] w-[75px] border border-[#bdbdbd] bg-[#e9e9e9] leading-[20px]">OK</button>
        <button className="h-[24px] w-[75px] border border-[#bdbdbd] bg-[#e9e9e9] leading-[20px]">Cancel</button>
      </footer>
    </section>
  )
}

/* ---------- navigation bar ---------- */

const NAV_TOOLS = [
  {
    name: 'Orbit',
    menu: true,
    art: (
      <>
        <path d="M10 3v17" stroke="#444" strokeWidth="3.4" />
        <path d="M10 2v17" stroke="#eee" strokeWidth="1.4" />
        <path d="M7 4l3-3 3 3" stroke="#444" />
        <path d="M13 8c9 1 8 6-2 6.500H2M6 11l-4 3.500L6 18" stroke="#333" strokeWidth="1.7" />
        <path d="M7 8c-5 .5-7 2-6 4" stroke="#333" strokeWidth="1.7" />
      </>
    ),
  },
  {
    name: 'Look at',
    menu: false,
    art: (
      <>
        <path d="M1 9V7l7-4v3l8-5-2 7" fill="#ddd" stroke="#555" strokeWidth="1.3" />
        <path d="M1 8h19v12H1z" fill="#e8e9ec" stroke="#555" strokeWidth="1.6" />
        <path d="M5 12h11v4H5z" fill="#cfd8e6" stroke="#555" strokeWidth="1.4" />
      </>
    ),
  },
  {
    name: 'Pan',
    menu: false,
    art: (
      <path
        d="M7 20c-1-3-4-6-6-8.500 1-1.500 3.500 0 5 1.500L4 6c0-1.500 2-1.500 2.500 0L8.500 10 8 2.500C8 1 10 1 10.200 2.500L11 9l1-7c.3-1.500 2-1.200 2 .2L13.700 9.500 16.500 4c.6-1.300 2.200-.7 2 .7-.5 3-1.500 6-2 9L15 20z"
        fill="#fff"
        stroke="#444"
        strokeWidth="1.2"
      />
    ),
  },
  {
    name: 'Zoom',
    menu: false,
    art: (
      <>
        <circle cx="7" cy="9" r="6" fill="#eef4f2" stroke="#666" strokeWidth="1.4" />
        <path d="M11 13l5 6" stroke="#334" strokeWidth="3.4" />
        <path d="M17.500 1v5M15 3.500h5M15 9h5" stroke="#333" strokeWidth="1.3" />
      </>
    ),
  },
  {
    name: 'Zoom window',
    menu: true,
    art: (
      <>
        <path d="M.5.5h19v19H.5z" stroke="#444" strokeDasharray="3 3" />
        <circle cx="9" cy="8.500" r="7.500" fill="#e6efec" stroke="#777" strokeWidth="1.4" />
        <path d="M14 14l5 6" stroke="#334" strokeWidth="3" />
      </>
    ),
  },
  {
    name: 'Display settings',
    menu: true,
    art: (
      <>
        <path d="M1 1h19v14H1z" fill="#e3e3e6" stroke="#555" strokeWidth="1.4" />
        <path d="M4 4h13v9H4z" fill="#9cbbe0" stroke="#34507a" />
        <path d="M8 15v3H6v2h9v-2h-2v-3" fill="#ddd" stroke="#555" />
      </>
    ),
  },
  {
    name: 'Grid settings',
    menu: true,
    art: (
      <>
        <path d="M.5.5h20v20H.5z" fill="#fff" stroke="#555" strokeWidth="1.4" />
        <path d="M4 0v21M7.500 0v21M11 0v21M14.500 0v21M18 0v21M0 4h21M0 7.500h21M0 11h21M0 14.500h21M0 18h21" stroke="#777" />
      </>
    ),
  },
  {
    name: 'Viewports',
    menu: true,
    art: (
      <>
        <path d="M.5 2h19v17H.5z" fill="#b6c8e2" stroke="#3e5478" strokeWidth="1.6" />
        <path d="M10 2v17M.5 10.500h19" stroke="#3e5478" strokeWidth="1.6" />
        <path d="M3.500 5h3.500v3H3.500zM13 5h3.500v3H13zM3.500 13h3.500v3H3.500zM13 13h3.500v3H13z" stroke="#7f96bb" />
      </>
    ),
  },
]

function NavBar() {
  return (
    <div className="flex h-[30px] items-center bg-[#f1f1f1] pl-[4px]">
      {NAV_TOOLS.map((tool) => (
        <button
          key={tool.name}
          aria-label={tool.name}
          className={`flex items-center gap-[5px] ${tool.menu ? 'pr-[8px] last:pr-[4px]' : 'pr-[13px]'}`}
        >
          <svg className="h-[20px] w-[20px]" viewBox="0 0 21 21" fill="none">{tool.art}</svg>
          {tool.menu && <Caret />}
        </button>
      ))}
    </div>
  )
}

/* ---------- taskbar ---------- */

const APPS: { name: string; state?: 'running' | 'active'; art: ReactNode }[] = [
  {
    name: 'Start',
    art: (
      <>
        <defs>
          <linearGradient id="win" gradientUnits="userSpaceOnUse" x1="0" y1="0" x2="30" y2="30">
            <stop offset="0" stopColor="#3fc3f7" />
            <stop offset="1" stopColor="#0067c6" />
          </linearGradient>
        </defs>
        <path d="M0 0h14.300v14.300H0zM15.700 0H30v14.300H15.700zM0 15.700h14.300V30H0zM15.700 15.700H30V30H15.700z" fill="url(#win)" />
      </>
    ),
  },
  {
    name: 'Search',
    art: (
      <>
        <circle cx="13.5" cy="13" r="10" fill="#dfe9f5" stroke="#1f1f1f" strokeWidth="3" />
        <path d="M20.500 20l7 7.500" stroke="#1f1f1f" strokeWidth="3.5" strokeLinecap="round" />
      </>
    ),
  },
  {
    name: 'Task view',
    art: (
      <>
        <path d="M8 8h20v20H8z" fill="#f4f4f4" stroke="#ccc" />
        <path d="M4 3h20v19H4z" fill="#2b2b2b" />
        <path d="M9 9h15v13H9z" fill="#4a4a4a" />
        <path d="M1 22h12v6H1z" fill="#c9ced6" />
      </>
    ),
  },
  {
    name: 'Store',
    art: (
      <>
        <path d="M9 7V2h12v5" fill="none" stroke="#29b5f0" strokeWidth="2" />
        <path d="M1 6h28v20a4 4 0 01-4 4H5a4 4 0 01-4-4z" fill="#14508a" />
        <path d="M1 19h28v7a4 4 0 01-4 4H5a4 4 0 01-4-4z" fill="#1b3c6b" />
        <path d="M9 12h5.500v5.500H9z" fill="#f25022" />
        <path d="M15.500 12H21v5.500h-5.500z" fill="#7fba00" />
        <path d="M9 18.500h5.500V24H9z" fill="#00a4ef" />
        <path d="M15.500 18.500H21V24h-5.500z" fill="#ffb900" />
      </>
    ),
  },
  {
    name: 'Edge',
    art: (
      <>
        <defs>
          <linearGradient id="edge" x1="0" y1="0" x2="1" y2="0">
            <stop offset="0" stopColor="#25a8e0" />
            <stop offset="0.6" stopColor="#35c8b0" />
            <stop offset="1" stopColor="#6fdc4e" />
          </linearGradient>
        </defs>
        <path d="M0 14C1 5 8 0 15 0c9 0 15 6 15 12 0 5-4 8-8 8-3 0-4.500-1-4-2.500C20 13 16 9 11 9 5 9 1 12 0 14z" fill="url(#edge)" />
        <path d="M0 14c1-3 5-5.500 10-5.500C7 11 5 16 7 21s8 9 13 8c-2 1-4 1-6 1C5 30-1 22 0 14z" fill="#0f7bd0" />
        <path d="M12 12c-4 5 0 12 7 12 4 0 7-1.500 9-2.500-2 5-6 8-11 8.500-6 0-11-5-10.500-11 .3-3 2.500-6 5.500-7z" fill="#0c4f9c" />
      </>
    ),
  },
  {
    name: 'Explorer',
    art: (
      <>
        <path d="M0 4a2 2 0 012-2h8l4 4h14a2 2 0 012 2v6H0z" fill="#e6a11a" />
        <path d="M0 9h11l3-3h16v20a2 2 0 01-2 2H2a2 2 0 01-2-2z" fill="#ffd257" />
        <path d="M5 28v-5a2 2 0 012-2h16a2 2 0 012 2v5z" fill="#1377c9" />
        <path d="M9 24.500h12" stroke="#0b4d8a" strokeWidth="1.5" />
      </>
    ),
  },
  {
    name: 'Chrome',
    state: 'running',
    art: (
      <>
        <path d="M15 15L2 7.500A15 15 0 0128 7.500z" fill="#e23b2e" />
        <path d="M15 15V30A15 15 0 012 7.500z" fill="#2da24c" />
        <path d="M15 7.500h13A15 15 0 0115 30l6.500-11.200z" fill="#fcc419" />
        <circle cx="15" cy="15" r="7.5" fill="#fff" />
        <circle cx="15" cy="15" r="5.8" fill="#3f7ee8" />
      </>
    ),
  },
  {
    name: 'VS Code',
    art: (
      <>
        <path d="M22 0v8L4 22.500 0 19.500v-1z" fill="#0f7fd0" />
        <path d="M22 30v-8L4 7.500 0 10.500v1z" fill="#1b8fe0" />
        <path d="M22 0l8 3.500v23L22 30z" fill="#2aa6f2" />
      </>
    ),
  },
  {
    name: 'Arduino',
    art: (
      <>
        <path d="M0 0h30v30H0z" fill="#0078d7" />
        <circle cx="15" cy="15" r="13.5" fill="#0a9a9e" />
        <path d="M15 15c-2-3-3-4-5.500-4a4 4 0 000 8c2.500 0 3.500-1 5.500-4s3-4 5.500-4a4 4 0 010 8c-2.500 0-3.500-1-5.500-4z" fill="none" stroke="#fff" strokeWidth="1.9" />
      </>
    ),
  },
  {
    name: 'Cura',
    art: (
      <>
        <path d="M6 2h21v21l-6 6H3V5z" fill="#1668ee" stroke="#fff" strokeWidth="1.5" />
        <path d="M19.500 10.500H14l-3 2.500v4l3 2.500h5.500" fill="none" stroke="#fff" strokeWidth="2.2" />
      </>
    ),
  },
  {
    name: 'Flash print',
    art: (
      <>
        <rect width="30" height="30" rx="4" fill="#22acd9" />
        <path d="M0 15l3 2 4-1 4-2 2-2 1 1.500 3-1 1 2 5 1 7 4.500-8-3-5-1.500-4 2-4 1-3 1.500-4-2z" fill="#fff" />
      </>
    ),
  },
  {
    name: 'Fusion 360',
    state: 'active',
    art: (
      <>
        <path d="M3 3l3-3h18v4h4v26H6l-3-3z" fill="#8f3a00" />
        <path d="M3 3l3-3h19v21H3z" fill="#ff6b00" />
        <path d="M3 3l3-3v21H3z" fill="#d95700" />
        <path d="M12 5h8v2.500h-5V10h4v2.500h-4V17h-3z" fill="#fff" />
        <text x="16.5" y="28" textAnchor="middle" fontSize="7" fontWeight="bold" fill="#fff" fontFamily="Liberation Sans, sans-serif">360</text>
      </>
    ),
  },
  {
    name: 'Beaker',
    state: 'running',
    art: (
      <>
        <path d="M11 1h8v11l6 15a2 2 0 01-2 3H7a2 2 0 01-2-3l6-15z" fill="#f8fbfd" stroke="#cfd6de" />
        <path d="M10 16h10l4.500 11a2 2 0 01-2 2.500h-15a2 2 0 01-2-2.500z" fill="#f7d511" />
        <path d="M12 26c-1-3 3-3 2-6 5 2 4 5 3 6z" fill="#5aa52c" />
      </>
    ),
  },
]

function Taskbar() {
  return (
    <footer className="grid h-[60px] grid-cols-[1fr_auto_1fr] items-center border-t border-[#a9b3bf] bg-[linear-gradient(to_right,#e2edf7_0%,#e0ecf9_18%,#d5e3fa_28%,#d6e1f7_45%,#d6dcf0_60%,#d9e0f0_75%,#e0edf9_83%,#deebf8_100%)] font-['Open_Sans',sans-serif] text-[#1b1b1b]">
      <button aria-label="Widgets" className="ml-[15px] justify-self-start">
        <svg className="h-[28px] w-[28px]" viewBox="0 0 28 28">
          <circle cx="13" cy="13" r="13" fill="#8f979f" />
          <path d="M15 22a3.500 3.500 0 010-7 5 5 0 019-1 4 4 0 010 8z" fill="#eceff2" />
        </svg>
      </button>
      <nav className="flex gap-[7px]">
        {APPS.map((app) => (
          <button
            key={app.name}
            aria-label={app.name}
            className={`relative flex h-[48px] w-[48px] items-center justify-center rounded-[5px] ${
              app.state === 'active' ? 'bg-[#ecf1fb] shadow-sm' : ''
            }`}
          >
            <svg className="h-[30px] w-[30px]" viewBox="0 0 30 30">{app.art}</svg>
            {app.state === 'running' && <span className="absolute bottom-0 h-[4px] w-[8px] rounded-full bg-[#7b828c]" />}
            {app.state === 'active' && <span className="absolute bottom-0 h-[4px] w-[20px] rounded-full bg-[#0073d4]" />}
          </button>
        ))}
      </nav>
      <div className="flex items-center justify-self-end pr-[25px] text-[14px] leading-[20px]">
        <svg className="mr-[24px] h-[8px] w-[14px]" viewBox="0 0 14 8" fill="none" stroke="#222" strokeWidth="1.6"><path d="M.5 7.500L7 1l6.500 6.500" /></svg>
        <svg className="mr-[21px] h-[19px] w-[19px]" viewBox="0 0 19 19">
          <circle cx="9.5" cy="9.5" r="9" fill="#36b3d6" stroke="#eaf6fb" />
          <path d="M7.500 4.500v8.500h5.500" fill="none" stroke="#fff" strokeWidth="2.4" />
        </svg>
        <svg className="mr-[24px] h-[14px] w-[21px]" viewBox="0 0 21 14">
          <path d="M5 13a4 4 0 01-.5-8A6 6 0 0115 4a4.500 4.500 0 011 9z" fill="#9a9a9a" stroke="#222" strokeWidth="1.4" />
          <path d="M4 12.500L14 6l4 5-2 1.500z" fill="#dedede" />
        </svg>
        <div className="mr-[23px] text-center">ENG<br />US</div>
        <svg className="mr-[10px] h-[15px] w-[20px]" viewBox="0 0 20 15" fill="none" stroke="#222" strokeWidth="1.5">
          <path d="M1 6c5-6 13-6 18 0" stroke="#b5bcc4" />
          <path d="M3.500 8.500c4-4.500 9-4.500 13 0M6 11c2.500-3 5.500-3 8 0" />
          <circle cx="10" cy="13" r="1.2" fill="#222" />
        </svg>
        <svg className="mr-[10px] h-[14px] w-[20px]" viewBox="0 0 20 14" fill="none" stroke="#222" strokeWidth="1.3">
          <path d="M1 5v4h3l4.500 4V1L4 5zM12 4l6 6M18 4l-6 6" />
        </svg>
        <svg className="mr-[22px] h-[12px] w-[21px]" viewBox="0 0 21 12">
          <rect x="0.7" y="0.7" width="16.5" height="10.6" rx="2.5" fill="none" stroke="#222" strokeWidth="1.4" />
          <path d="M3 3h4v6H3zM18.500 4.500h1.500v3h-1.500z" fill="#222" stroke="#222" />
        </svg>
        <time className="mr-[10px] text-right">8:49 PM<br />6/17/2023</time>
        <span className="flex h-[20px] w-[20px] items-center justify-center rounded-full bg-[#0067c0] text-[12px] text-white">6</span>
      </div>
    </footer>
  )
}

export default function App() {
  return (
    <div className="flex h-screen flex-col overflow-hidden bg-white font-['Liberation_Sans',Arial,sans-serif]">
      <TitleBar />
      <DocumentBar />
      <Ribbon />
      <div className="h-[3px] bg-[#f3f3f3]" />
      <main className="relative flex min-h-0 flex-1 flex-col justify-between overflow-hidden">
        <Viewport />
        <Browser />
        <ViewCube />
        <RemeshPanel />
        <div className="relative grid grid-cols-[1fr_auto_1fr] items-center pb-[5px]">
          <div className="ml-[5px] flex h-[31px] w-[375px] items-center border border-t-0 border-[#c6c6c6] bg-[#f1f1f1] pr-[13px] pl-[30px] text-[12px] text-[#666]">
            <h2 className="flex-1">COMMENTS</h2>
            <RoundSign plus />
          </div>
          <NavBar />
          <span className="mr-[24px] justify-self-end text-[14px] font-bold text-[#444]">MeshBody1</span>
        </div>
      </main>
      <Taskbar />
    </div>
  )
}
